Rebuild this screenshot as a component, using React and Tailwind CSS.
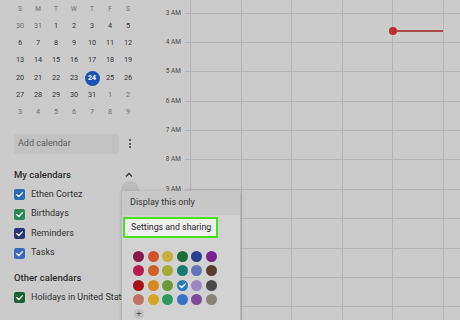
import React from "react";

const weekDays = ["S", "M", "T", "W", "T", "F", "S"];

// mini calendar: [day, dim]
const monthRows = [
  [[30, 1], [31, 1], [1], [2], [3], [4], [5]],
  [[6], [7], [8], [9], [10], [11], [12]],
  [[13], [14], [15], [16], [17], [18], [19]],
  [[20], [21], [22], [23], [24], [25], [26]],
  [[27], [28], [29], [30], [31], [1, 1], [2, 1]],
  [[3, 1], [4, 1], [5, 1], [6, 1], [7, 1], [8, 1], [9, 1]],
];

const hours = ["3 AM", "4 AM", "5 AM", "6 AM", "7 AM", "8 AM", "9 AM", "10 AM", "11 AM", "12 PM", "1 PM"];

const myCalendars = [
  { name: "Ethen Cortez", color: "bg-[#2b6cb3]" },
  { name: "Birthdays", color: "bg-[#2d8856]" },
  { name: "Reminders", color: "bg-[#2c3478]" },
  { name: "Tasks", color: "bg-[#3a69c0]" },
];

const swatches = [
  ["#8a1847", "#d4522c", "#c8ae3a", "#1d6a3a", "#2a3f8e", "#77248e"],
  ["#bb1c50", "#d25f29", "#a6ab35", "#167b6e", "#6373b6", "#5a3d31"],
  ["#a6111b", "#d6871f", "#6c9a3a", "#2a7cc1", "#9a87c4", "#494949"],
  ["#bf7168", "#d6a524", "#2e985e", "#3a71ca", "#7d4a9c", "#898377"],
];

function Check({ className = "stroke-white" }) {
  return (
    <svg width="9" height="9" viewBox="0 0 10 10" fill="none">
      <path d="M2 5.2 L4.2 7.3 L8.3 2.9" className={className} strokeWidth="1.5" strokeLinecap="round" strokeLinejoin="round" />
    </svg>
  );
}

function CalRow({ name, color }) {
  return (
    <div className="h-[19.5px] flex items-center">
      <span className={`w-[11px] h-[11px] rounded-[2px] ${color} flex items-center justify-center shrink-0`}>
        <Check />
      </span>
      <span className="ml-[6px] text-[9px] text-[#2f2f2f] whitespace-nowrap">{name}</span>
    </div>
  );
}

export default function App() {
  return (
    <div className="relative w-[460px] h-[320px] overflow-hidden bg-[#cbcbcb] flex font-['Roboto',sans-serif]">
      {/* Sidebar */}
      <div className="w-[150px] shrink-0 flex flex-col pl-[14px]">
        {/* Mini calendar */}
        <div className="-ml-[3px] pt-[1.5px]">
          <div className="grid grid-cols-[repeat(7,18px)] h-[16px] items-center">
            {weekDays.map((d, i) => (
              <span key={i} className="text-center text-[6.5px] text-[#6d6d6d]">{d}</span>
            ))}
          </div>
          {monthRows.map((row, r) => (
            <div key={r} className="grid grid-cols-[repeat(7,18px)] h-[17.33px] items-center">
              {row.map(([d, dim], c) =>
                d === 24 && !dim ? (
                  <span key={c} className="mx-auto w-[15px] h-[15px] rounded-full bg-[#1b52b8] text-white text-[7px] font-bold flex items-center justify-center">
                    24
                  </span>
                ) : (
                  <span key={c} className={`text-center text-[7.3px] ${dim ? "text-[#6e6e6e]" : "text-[#333]"}`}>{d}</span>
                )
              )}
            </div>
          ))}
        </div>

        {/* Add calendar */}
        <div className="mt-[12.5px] flex items-center">
          <div className="w-[105px] h-[20px] rounded-[2px] bg-[#c2c2c2] flex items-center pl-[4px] text-[9px] text-[#5c5c5c]">
            Add calendar
          </div>
          <div className="ml-[10px] flex flex-col gap-[1.5px]">
            <span className="w-[2px] h-[2px] rounded-full bg-[#3a3a3a]" />
            <span className="w-[2px] h-[2px] rounded-full bg-[#3a3a3a]" />
            <span className="w-[2px] h-[2px] rounded-full bg-[#3a3a3a]" />
          </div>
        </div>

        {/* My calendars */}
        <div className="mt-[11px] h-[20px] flex items-center justify-between pr-[17px]">
          <span className="text-[9.5px] font-medium text-[#2c2c2c]">My calendars</span>
          <svg width="8" height="6" viewBox="0 0 8 6" fill="none">
            <path d="M1 4.5 L4 1.5 L7 4.5" stroke="#333" strokeWidth="1.3" />
          </svg>
        </div>
        {myCalendars.map((c) => (
          <CalRow key={c.name} {...c} />
        ))}

        <div className="mt-[4.75px] h-[20px] flex items-center">
          <span className="text-[9.5px] font-medium text-[#2c2c2c]">Other calendars</span>
        </div>
        <CalRow name="Holidays in United States" color="bg-[#1c6237]" />
      </div>

      {/* Day grid */}
      <div className="flex-1 flex flex-col">
        <div className="h-[12.5px] flex shrink-0">
          <div className="w-[40px] shrink-0" />
          {[0, 1, 2, 3, 4, 5].map((c) => (
            <div key={c} className="w-[50.6px] shrink-0 border-l border-[#b2b4b7]" />
          ))}
        </div>
        {hours.map((h, r) => (
          <div key={h} className="h-[29.4px] flex shrink-0">
            <div className="w-[35px] shrink-0 pr-[4px] text-right">
              <span className="block text-[6.5px] leading-[8px] text-[#4a4a4a] -translate-y-1/2">{h}</span>
            </div>
            <div className="w-[5px] shrink-0 border-t border-[#b2b4b7]" />
            {[0, 1, 2, 3, 4, 5].map((c) => (
              <div key={c} className="relative w-[50.6px] shrink-0 border-l border-t border-[#b2b4b7]">
                {r === 0 && c === 4 && (
                  <div className="absolute left-[-4.5px] top-[13.5px] w-[55px] flex items-center">
                    <span className="w-[8px] h-[8px] rounded-full bg-[#bb2f2f] shrink-0" />
                    <span className="flex-1 h-[2px] bg-[#a94a4a]" />
                  </div>
                )}
              </div>
            ))}
          </div>
        ))}
      </div>

      {/* hover circle behind menu */}
      <div className="absolute left-[121px] top-[181px] w-[18px] h-[18px] rounded-full bg-[#bcbcbc]" />

      {/* Popup menu */}
      <div className="absolute left-[122px] top-[191px] w-[118px] h-[140px] bg-[#d2d2d2] shadow-[0_1px_4px_rgba(0,0,0,0.25)] flex flex-col">
        <div className="h-[24px] bg-[#c8c8c8] flex items-center pl-[8px] text-[9px] text-[#333]">Display this only</div>
        <div className="mt-[2px] ml-[1px] w-[95px] h-[21px] border-[2.5px] border-[#47e01f] bg-[#efefef] flex items-center pl-[6px] text-[8.8px] text-[#2a2a2a] whitespace-nowrap">
          Settings and sharing
        </div>
        <div className="mt-[11px] pl-[9.5px] flex flex-col">
          {swatches.map((row, r) => (
            <div key={r} className="flex h-[14.5px] items-center">
              {row.map((col, c) => (
                <span key={c} className="w-[14.5px] flex justify-center">
                  <span className="w-[11px] h-[11px] rounded-full flex items-center justify-center" style={{ backgroundColor: col }}>
                    {r === 2 && c === 3 && <Check />}
                  </span>
                </span>
              ))}
            </div>
          ))}
          <div className="h-[14.5px] w-[14.5px] flex items-center justify-center">
            <span className="w-[10px] h-[10px] rounded-full bg-[#bfbfbf] text-[#555] text-[9px] leading-none flex items-center justify-center">+</span>
          </div>
        </div>
      </div>
    </div>
  );
}
